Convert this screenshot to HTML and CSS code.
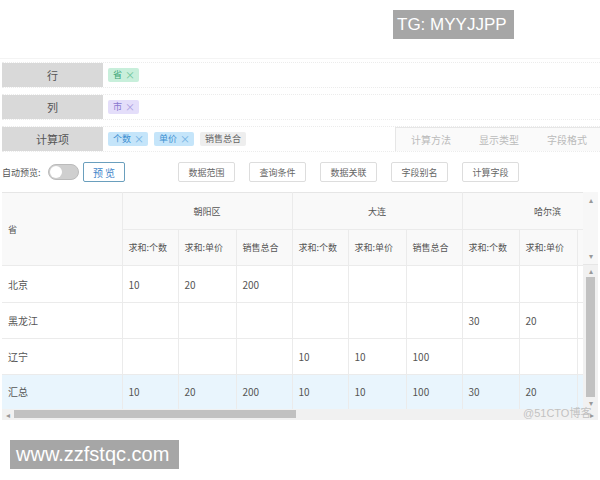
FILE: index.html
```html
<!DOCTYPE html>
<html>
<head>
<meta charset="utf-8">
<link rel="stylesheet" href="styles.css">
</head>
<body>
<div class="page">
  <div class="top"></div>
  <div class="fields">
    <div class="field">
      <div class="label">行</div>
      <div class="value"><span class="tag green">省 <i>×</i></span></div>
    </div>
    <div class="field">
      <div class="label">列</div>
      <div class="value"><span class="tag purple">市 <i>×</i></span></div>
    </div>
    <div class="field">
      <div class="label">计算项</div>
      <div class="value">
        <span class="tag blue">个数 <i>×</i></span>
        <span class="tag blue">单价 <i>×</i></span>
        <span class="tag gray">销售总合</span>
      </div>
      <div class="tabs"><span>计算方法</span><span>显示类型</span><span>字段格式</span></div>
    </div>
  </div>
  <div class="toolbar">
    <span class="auto">自动预览:</span>
    <span class="toggle"><span class="knob"></span></span>
    <button class="btn primary">预 览</button>
    <div class="actions">
      <button class="btn">数据范围</button>
      <button class="btn">查询条件</button>
      <button class="btn">数据关联</button>
      <button class="btn">字段别名</button>
      <button class="btn">计算字段</button>
    </div>
  </div>
  <div class="grid-wrap">
    <div class="grid-main">
      <div class="grid-clip">
        <table class="grid">
          <colgroup>
            <col style="width:120px"><col style="width:56px"><col style="width:58px"><col style="width:56px">
            <col style="width:56px"><col style="width:58px"><col style="width:56px">
            <col style="width:57px"><col style="width:58px"><col style="width:56px">
          </colgroup>
          <thead>
            <tr class="h1">
              <th rowspan="2" class="left">省</th>
              <th colspan="3">朝阳区</th>
              <th colspan="3">大连</th>
              <th colspan="3">哈尔滨</th>
            </tr>
            <tr class="h2">
              <th class="left">求和:个数</th><th class="left">求和:单价</th><th class="left">销售总合</th>
              <th class="left">求和:个数</th><th class="left">求和:单价</th><th class="left">销售总合</th>
              <th class="left">求和:个数</th><th class="left">求和:单价</th><th class="left">销售总合</th>
            </tr>
          </thead>
          <tbody>
            <tr class="r1"><td>北京</td><td>10</td><td>20</td><td>200</td><td></td><td></td><td></td><td></td><td></td><td></td></tr>
            <tr class="r2"><td>黑龙江</td><td></td><td></td><td></td><td></td><td></td><td></td><td>30</td><td>20</td><td>600</td></tr>
            <tr class="r3"><td>辽宁</td><td></td><td></td><td></td><td>10</td><td>10</td><td>100</td><td></td><td></td><td></td></tr>
            <tr class="r4 sum"><td>汇总</td><td>10</td><td>20</td><td>200</td><td>10</td><td>10</td><td>100</td><td>30</td><td>20</td><td>600</td></tr>
          </tbody>
        </table>
      </div>
      <div class="vbar">
        <div class="vhead"><span class="arr">▴</span><span class="arr">▾</span></div>
        <div class="vbody"><span class="arr">▴</span><span class="thumb"></span><span class="arr">▾</span></div>
      </div>
    </div>
    <div class="hbar"><span class="harr">◂</span><span class="hthumb"></span><span class="hspace"></span><span class="harr">▸</span></div>
  </div>
  <div class="mark51">@51CTO博客</div>
  <div class="wm tg">TG: MYYJJPP</div>
  <div class="wm www">www.zzfstqc.com</div>
</div>
</body>
</html>
```

FILE: styles.css
```css
html, body {
  margin: 0;
  padding: 0;
  background: #fff;
}
body {
  font-family: "Noto Sans CJK SC", "Noto Sans", sans-serif;
  color: #555;
  font-size: 10px;
}
.page {
  position: relative;
  width: 600px;
  height: 480px;
  overflow: hidden;
}
.top {
  height: 58px;
  border-bottom: 1px solid #f4f4f4;
}
.fields {
  display: flex;
  flex-direction: column;
  gap: 6px;
  padding: 3px 0 0 2px;
}
.field {
  display: flex;
  height: 26px;
  border-top: 1px dotted #ececec;
  border-bottom: 1px dotted #ececec;
  box-sizing: border-box;
}
.label {
  width: 101px;
  flex: none;
  background: #d9d9d9;
  color: #555;
  font-size: 11px;
  display: flex;
  align-items: center;
  justify-content: center;
}
.value {
  flex: 1;
  display: flex;
  align-items: center;
  gap: 6px;
  padding-left: 5px;
}
.tag {
  display: inline-flex;
  align-items: center;
  height: 14px;
  padding: 0 4px 0 5px;
  border-radius: 2px;
  font-size: 9px;
  line-height: 14px;
}
.tag i {
  font-style: normal;
  margin-left: 3px;
  color: #8aa;
  font-size: 10px;
}
.tag.green { background: #c8efdb; color: #3aa574; }
.tag.green i { color: #6cc49a; }
.tag.purple { background: #e4defa; color: #8a78cf; }
.tag.purple i { color: #a99ce0; }
.tag.blue { background: #c5e5fa; color: #3d8fd1; }
.tag.blue i { color: #6fb0e2; }
.tag.gray { background: #eeeeee; color: #666; padding: 0 5px; }
.tabs {
  width: 205px;
  flex: none;
  background: #fafafa;
  border-left: 1px solid #e6e6e6;
  border-top: 1px solid #e6e6e6;
  display: flex;
  align-items: center;
  gap: 28px;
  padding-left: 15px;
  box-sizing: border-box;
  color: #bbb;
  font-size: 10px;
}
.toolbar {
  display: flex;
  align-items: center;
  height: 20px;
  margin-top: 10px;
  padding-left: 2px;
}
.auto {
  font-size: 9px;
  color: #555;
  width: 46px;
}
.toggle {
  width: 31px;
  height: 16px;
  border-radius: 8px;
  background: #cfcfcf;
  position: relative;
  box-sizing: border-box;
  border: 1px solid #bbb;
}
.knob {
  position: absolute;
  left: 1px;
  top: 1px;
  width: 12px;
  height: 12px;
  border-radius: 50%;
  background: #fff;
}
.btn {
  font-family: inherit;
  font-size: 9px;
  color: #666;
  background: #fff;
  border: 1px solid #ddd;
  border-radius: 2px;
  height: 20px;
  width: 57px;
  padding: 0;
}
.btn.primary {
  margin-left: 4px;
  width: 42px;
  border: 1px solid #6a9fbd;
  color: #3f86c9;
  font-size: 10px;
}
.actions {
  display: flex;
  gap: 14px;
  margin-left: 53px;
}
.grid-wrap {
  margin: 10px 0 0 2px;
  width: 596px;
}
.grid-main {
  display: flex;
}
.grid-clip {
  width: 581px;
  overflow: hidden;
}
.grid {
  border-collapse: collapse;
  table-layout: fixed;
  width: 631px;
}
.grid th, .grid td {
  border: 1px solid #ebebeb;
  font-weight: normal;
  padding: 0 0 0 6px;
  text-align: left;
  white-space: nowrap;
  overflow: hidden;
  font-size: 10px;
  color: #555;
}
.grid th {
  background: #f9f9f9;
  text-align: center;
  padding: 0;
  font-size: 9px;
}
.grid th.left {
  text-align: left;
  padding-left: 6px;
}
.grid tr:first-child th { border-top: 1px solid #e6e6e6; }
.grid th:first-child, .grid td:first-child { border-left: none; }
.h1 { height: 37px; }
.h2 { height: 36px; }
.r1 { height: 37px; }
.r2 { height: 36px; }
.r3 { height: 36px; }
.r4 { height: 34px; }
.grid tr.sum td {
  background: #e9f5fd;
  border-bottom: none;
}
.grid td { background: #fff; }
.vbar {
  width: 15px;
  display: flex;
  flex-direction: column;
  background: #f1f1f1;
}
.vhead {
  height: 73px;
  display: flex;
  flex-direction: column;
  justify-content: space-between;
  align-items: center;
  border-bottom: 1px solid #e6e6e6;
  box-sizing: border-box;
  padding: 3px 0;
  background: #f7f7f7;
}
.vbody {
  flex: 1;
  display: flex;
  flex-direction: column;
  align-items: center;
  padding: 1px 0;
}
.arr {
  font-size: 8px;
  line-height: 10px;
  color: #999;
}
.thumb {
  flex: 1;
  width: 9px;
  background: #c1c1c1;
  margin: 1px 0;
}
.hbar {
  display: flex;
  align-items: center;
  height: 11px;
  background: #f1f1f1;
  width: 596px;
}
.harr {
  font-size: 8px;
  width: 12px;
  text-align: center;
  color: #999;
}
.hthumb {
  width: 282px;
  height: 8px;
  background: #c1c1c1;
}
.hspace { flex: 1; }
.mark51 {
  position: absolute;
  left: 523px;
  top: 404px;
  font-family: "Liberation Sans", "Noto Sans CJK SC", sans-serif;
  font-size: 11px;
  color: rgba(160, 160, 160, 0.6);
}
.wm {
  position: absolute;
  background: #a6a6a6;
  color: #fff;
  font-family: "Liberation Sans", Arial, sans-serif;
  line-height: 29px;
  height: 29px;
  box-sizing: border-box;
}
.wm.tg {
  left: 393px;
  top: 10px;
  width: 121px;
  font-size: 17px;
  padding-left: 4px;
}
.wm.www {
  left: 10px;
  top: 440px;
  width: 169px;
  font-size: 20px;
  padding-left: 6px;
}
```
